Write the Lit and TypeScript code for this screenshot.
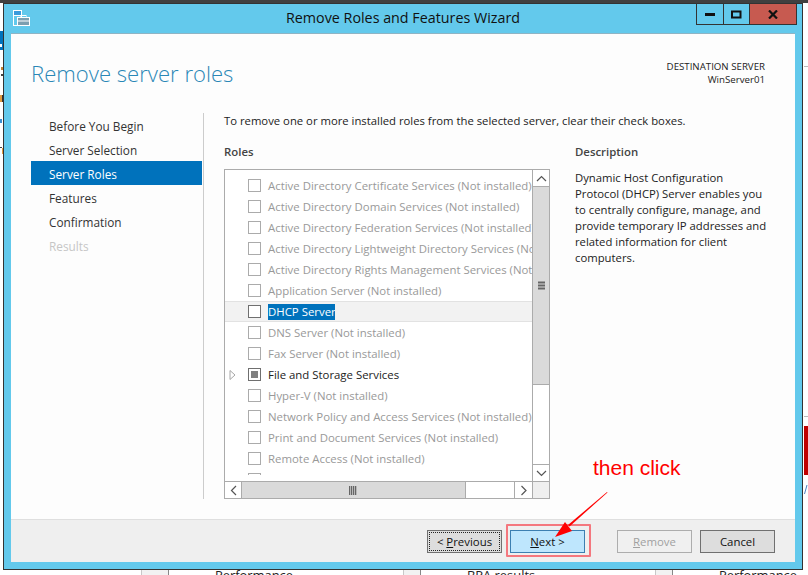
import { LitElement, html, css, svg } from "lit"
import { customElement } from "lit/decorators.js"
import { classMap } from "lit/directives/class-map.js"

const NAV = [
  { label: "Before You Begin" },
  { label: "Server Selection" },
  { label: "Server Roles", active: true },
  { label: "Features" },
  { label: "Confirmation" },
  { label: "Results", off: true },
]

const NI = " (Not installed)"
const ROLES = [
  { label: "Active Directory Certificate Services" + NI, off: true },
  { label: "Active Directory Domain Services" + NI, off: true },
  { label: "Active Directory Federation Services" + NI, off: true },
  { label: "Active Directory Lightweight Directory Services" + NI, off: true },
  { label: "Active Directory Rights Management Services" + NI, off: true },
  { label: "Application Server" + NI, off: true },
  { label: "DHCP Server", picked: true },
  { label: "DNS Server" + NI, off: true },
  { label: "Fax Server" + NI, off: true },
  { label: "File and Storage Services", partial: true, tree: true },
  { label: "Hyper-V" + NI, off: true },
  { label: "Network Policy and Access Services" + NI, off: true },
  { label: "Print and Document Services" + NI, off: true },
  { label: "Remote Access" + NI, off: true },
  { label: "Remote Desktop Services" + NI, off: true },
]

// scraps of the page behind the dialog, [x, y, w, h, colour]
const SCRAPS: [number, number, number, number, string][] = [
  [0, 31, 3, 19, "#0072bc"],
  [0, 44, 2, 3, "#ffffff"],
  [1, 67, 2, 3, "#c08030"],
  [1, 74, 2, 2, "#444444"],
  [0, 95, 2, 7, "#e09a40"],
  [2, 95, 1, 7, "#333333"],
  [0, 119, 2, 4, "#3a8fd0"],
  [0, 147, 2, 1, "#444444"],
  [2, 148, 1, 6, "#e09a40"],
  [804, 416, 4, 1, "#bbbbbb"],
  [804, 426, 4, 49, "#c00000"],
  [804, 66, 4, 1, "#bbbbbb"],
]

const chevron = (points: string) => html`
  <svg class="chev" width="15" height="15" viewBox="0 0 15 15">
    <polyline points=${points} fill="none" stroke="#555" stroke-width="1.2"></polyline>
  </svg>
`

@customElement("app-root")
export class AppRoot extends LitElement {
  static styles = css`
    :host {
      display: block;
      position: relative;
      width: 808px;
      height: 575px;
      overflow: hidden;
      background: #fff;
      font-family: "Open Sans", "Liberation Sans", sans-serif;
      font-size: 11.4px;
      color: #222;
    }

    .topband {
      height: 3px;
      background: #404040;
    }

    .scrap {
      position: absolute;
    }

    .behind {
      position: absolute;
      left: 0;
      top: 570px;
      width: 808px;
      height: 5px;
      overflow: hidden;
      display: grid;
      grid-template-columns: 141px 28px 234px 18px 234px 18px 135px;
      font-size: 12.9px;
      line-height: 16px;
      color: #222;
    }

    .behind .gap {
      background: #f2f2f2;
      border-left: 1px solid #c8c8c8;
      border-right: 1px solid #888;
    }

    .behind .cell {
      padding-left: 46px;
      margin-top: -3px;
      white-space: nowrap;
    }

    /* dialog window */
    .window {
      position: absolute;
      left: 3px;
      top: 3px;
      width: 800px;
      height: 567px;
      box-sizing: border-box;
      border: 1px solid #333;
      background: #63c9ec;
      padding: 0 7px 7px;
      display: flex;
      flex-direction: column;
    }

    .titlebar {
      height: 30px;
      flex: none;
      margin: 0 -7px;
      display: grid;
      grid-template-columns: 1fr auto 1fr;
      align-items: start;
    }

    .appicon {
      margin: 6px 0 0 9px;
      display: block;
    }

    .title {
      font-size: 14.3px;
      line-height: 28px;
      color: #111;
    }

    .caption {
      justify-self: end;
      margin-right: 5px;
      display: flex;
      height: 21px;
      border: 1px solid #333;
      border-top: 0;
      box-sizing: border-box;
    }

    .caption div {
      display: flex;
      align-items: center;
      justify-content: center;
      box-sizing: border-box;
      height: 20px;
    }

    .caption .min {
      width: 27px;
      border-right: 1px solid #333;
    }

    .caption .max {
      width: 26px;
      border-right: 1px solid #333;
    }

    .caption .close {
      width: 46px;
      background: #c75a50;
    }

    .client {
      flex: 1;
      min-height: 0;
      background: #fdfdfd;
      box-shadow: 0 -1px 0 #8fb4c4;
      display: flex;
      flex-direction: column;
    }

    .head {
      height: 79px;
      flex: none;
      box-sizing: border-box;
      padding: 24px 30px 0 20px;
      display: flex;
      justify-content: space-between;
      align-items: flex-start;
    }

    .page-title {
      font-size: 22.1px;
      font-weight: 300;
      line-height: 30px;
      color: #2a87b6;
    }

    .dest {
      margin-top: 2px;
      text-align: right;
      font-size: 9.7px;
      line-height: 13px;
      color: #222;
    }

    .body {
      flex: 1;
      min-height: 0;
      display: flex;
      padding-bottom: 20px;
    }

    .side {
      width: 193px;
      flex: none;
      box-sizing: border-box;
      padding: 0 1px 0 20px;
      border-right: 1px solid #ccc;
      font-size: 11.8px;
    }

    .nav {
      height: 24px;
      line-height: 27px;
      padding-left: 18px;
      color: #333;
    }

    .nav.active {
      background: #0072bc;
      line-height: 26px;
      color: #fff;
    }

    .nav.off {
      color: #c6c6c6;
    }

    .main {
      padding-left: 20px;
      flex: 1;
      min-width: 0;
    }

    .intro {
      font-size: 11.3px;
      line-height: 16px;
      color: #222;
    }

    .cols {
      margin-top: 15px;
      display: grid;
      grid-template-columns: 326px 200px;
      column-gap: 25px;
    }

    .heading {
      line-height: 16px;
      font-weight: 600;
      color: #444;
    }

    /* roles list */
    .list {
      margin-top: 9px;
      width: 326px;
      height: 330px;
      box-sizing: border-box;
      border: 1px solid #ababab;
      background: #fff;
      display: grid;
      grid-template-columns: 307px 17px;
      grid-template-rows: 311px 17px;
    }

    .rows {
      margin-top: 5px;
      height: 300px;
      overflow: hidden;
    }

    .row {
      height: 21px;
      display: grid;
      grid-template-columns: 23px 13px auto;
      column-gap: 0;
      align-items: center;
      white-space: nowrap;
      color: #222;
    }

    .row.off {
      color: #999;
    }

    .row.picked {
      background: #f2f2f2;
      box-shadow: inset 0 1px 0 #e2e2e2, inset 0 -1px 0 #e2e2e2;
    }

    .tree {
      display: block;
      margin-left: 4px;
    }

    .check {
      width: 13px;
      height: 13px;
      box-sizing: border-box;
      border: 1px solid #6f6f6f;
      background: #fff;
      display: flex;
      align-items: center;
      justify-content: center;
    }

    .off .check {
      border-color: #ababab;
    }

    .check i {
      width: 7px;
      height: 7px;
      background: #808080;
    }

    .label {
      margin-left: 7px;
      line-height: 16px;
    }

    .label.sel {
      background: #0072bc;
      color: #fff;
      justify-self: start;
      width: 67px;
      overflow: hidden;
    }

    .vbar {
      display: flex;
      flex-direction: column;
      border-left: 1px solid #ababab;
      width: 17px;
      box-sizing: border-box;
    }

    .hbar {
      display: flex;
      border-top: 1px solid #ababab;
      height: 17px;
      box-sizing: border-box;
    }

    .sbtn {
      width: 16px;
      height: 16px;
      flex: none;
      display: flex;
      align-items: center;
      justify-content: center;
      background: #fff;
    }

    .vbar .sbtn.up {
      border-bottom: 1px solid #ababab;
    }

    .vbar .sbtn.down {
      border-top: 1px solid #ababab;
      margin-top: auto;
    }

    .hbar .sbtn.left {
      border-right: 1px solid #ababab;
    }

    .hbar .sbtn.right {
      border-left: 1px solid #ababab;
      margin-left: auto;
      width: 17px;
    }

    .thumb {
      background: #dadada;
      display: flex;
      align-items: center;
      justify-content: center;
      box-sizing: border-box;
    }

    .vbar .thumb {
      height: 198px;
      border-bottom: 1px solid #ababab;
    }

    .hbar .thumb {
      width: 224px;
      border-right: 1px solid #ababab;
    }

    .grip {
      display: block;
    }

    .corner {
      background: #efefef;
      border-top: 1px solid #ababab;
      border-left: 1px solid #ababab;
      box-sizing: border-box;
    }

    .desc {
      margin-top: 10px;
      font-size: 11.3px;
      line-height: 16px;
      color: #222;
    }

    /* wizard footer */
    .foot {
      height: 43px;
      flex: none;
      box-sizing: border-box;
      background: #efefef;
      border-top: 1px solid #dfdfdf;
      padding: 10px 20px 0 0;
      display: flex;
      justify-content: flex-end;
      gap: 8px;
    }

    .btn {
      width: 75px;
      height: 23px;
      box-sizing: border-box;
      border: 1px solid #707070;
      background: #ddd;
      font: inherit;
      font-size: 11.4px;
      color: #111;
      padding: 0;
      display: flex;
      align-items: center;
      justify-content: center;
    }

    .btn.prev {
      outline: 1px dotted #222;
      outline-offset: -3px;
    }

    .btn.next {
      border-color: #3c7fb1;
      background: #bee6fd;
      margin-right: 24px;
    }

    .btn.dis {
      border-color: #adadad;
      background: #f0f0f0;
      color: #a0a0a0;
    }

    /* red annotation drawn on top of the screenshot */
    .mark {
      position: absolute;
      left: 506px;
      top: 524px;
      width: 85px;
      height: 33px;
      box-sizing: border-box;
      border: 2px solid #f4777e;
      border-radius: 1px;
    }

    .note {
      position: absolute;
      left: 593px;
      top: 456px;
      font-family: "Liberation Sans", Arial, sans-serif;
      font-size: 21px;
      line-height: 24px;
      color: #f00;
    }

    .arrow {
      position: absolute;
      left: 0;
      top: 0;
      pointer-events: none;
    }
  `

  render() {
    return html`
      <div class="topband"></div>
      ${SCRAPS.map(
        ([x, y, w, h, c]) =>
          html`<div class="scrap" style="left:${x}px;top:${y}px;width:${w}px;height:${h}px;background:${c}"></div>`
      )}
      <div class="behind">
        <div></div>
        <div class="gap"></div>
        <div class="cell">Performance</div>
        <div class="gap"></div>
        <div class="cell">BPA results</div>
        <div class="gap"></div>
        <div class="cell">Performance</div>
      </div>

      <div class="window">
        <div class="titlebar">
          ${this._appIcon()}
          <div class="title">Remove Roles and Features Wizard</div>
          <div class="caption">
            <div class="min">
              <svg width="11" height="4" viewBox="0 0 11 4"><rect y="1" width="10" height="3" fill="#111"></rect></svg>
            </div>
            <div class="max">
              <svg width="11" height="9" viewBox="0 0 11 9"><rect x="1" y="1.5" width="8.5" height="6" fill="none" stroke="#111" stroke-width="2"></rect></svg>
            </div>
            <div class="close">
              <svg width="10" height="9" viewBox="0 0 10 9"><path d="M1 .5 9 8.5M9 .5 1 8.5" stroke="#111" stroke-width="2.2" fill="none"></path></svg>
            </div>
          </div>
        </div>

        <div class="client">
          <div class="head">
            <div class="page-title">Remove server roles</div>
            <div class="dest">DESTINATION SERVER<br />WinServer01</div>
          </div>

          <div class="body">
            <div class="side">
              ${NAV.map(
                (n) => html`<div class=${classMap({ nav: true, active: !!n.active, off: !!n.off })}>${n.label}</div>`
              )}
            </div>
            <div class="main">
              <div class="intro">To remove one or more installed roles from the selected server, clear their check boxes.</div>
              <div class="cols">
                <div>
                  <div class="heading">Roles</div>
                  ${this._list()}
                </div>
                <div>
                  <div class="heading">Description</div>
                  <div class="desc">
                    Dynamic Host Configuration<br />
                    Protocol (DHCP) Server enables you<br />
                    to centrally configure, manage, and<br />
                    provide temporary IP addresses and<br />
                    related information for client<br />
                    computers.
                  </div>
                </div>
              </div>
            </div>
          </div>

          <div class="foot">
            <button class="btn prev">&lt;&nbsp;<u>P</u>revious</button>
            <button class="btn next"><u>N</u>ext&nbsp;&gt;</button>
            <button class="btn dis"><u>R</u>emove</button>
            <button class="btn">Cancel</button>
          </div>
        </div>
      </div>

      <div class="mark"></div>
      <div class="note">then click</div>
      <svg class="arrow" width="808" height="575" viewBox="0 0 808 575">
        <polygon points="607,492 607.5,492.5 569.5,526.5 568,525" fill="#f00"></polygon>
        <polygon points="555,537 565,522 572,531" fill="#f00"></polygon>
        <path d="M807 485 804.5 494" stroke="#4a7fc0" fill="none"></path>
      </svg>
    `
  }

  private _list() {
    return html`
      <div class="list">
        <div class="rows">
          ${ROLES.map(
            (r) => html`
              <div class=${classMap({ row: true, off: !!r.off, picked: !!r.picked })}>
                ${r.tree
                  ? html`<svg class="tree" width="7" height="10" viewBox="0 0 7 10"><polygon points="1,.5 6,5 1,9.5" fill="none" stroke="#a6a6a6"></polygon></svg>`
                  : html`<span></span>`}
                <div class="check">${r.partial ? html`<i></i>` : ""}</div>
                <div class=${classMap({ label: true, sel: !!r.picked })}>${r.label}</div>
              </div>
            `
          )}
        </div>
        <div class="vbar">
          <div class="sbtn up">${chevron("3,10 7.5,5.5 12,10")}</div>
          <div class="thumb">
            <svg class="grip" width="9" height="9" viewBox="0 0 9 9">
              ${[0.5, 3.5, 6.5].map((y) => svg`<rect x="1" y=${y} width="7" height="2" fill="#666"></rect>`)}
            </svg>
          </div>
          <div class="sbtn down">${chevron("3,5 7.5,9.5 12,5")}</div>
        </div>
        <div class="hbar">
          <div class="sbtn left">${chevron("10,3 5.5,7.5 10,12")}</div>
          <div class="thumb">
            <svg class="grip" width="9" height="9" viewBox="0 0 9 9">
              ${[0, 2, 4, 6].map((x) => svg`<rect x=${x} y="0" width="1.3" height="9" fill="#666"></rect>`)}
            </svg>
          </div>
          <div class="sbtn right">${chevron("5.5,3 10,7.5 5.5,12")}</div>
        </div>
        <div class="corner"></div>
      </div>
    `
  }

  private _appIcon() {
    return html`
      <svg class="appicon" width="17" height="16" viewBox="0 0 17 16">
        <rect x="0.5" y="0.5" width="8" height="15" fill="#3a9bdc" stroke="#fff"></rect>
        <rect x="1" y="5" width="7" height="1" fill="#fff"></rect>
        <rect x="1" y="6" width="7" height="9" fill="#63c9ec"></rect>
        <rect x="4.5" y="7.5" width="12" height="8" fill="#7d9fb0" stroke="#fff"></rect>
        <rect x="8" y="5.5" width="5" height="2" fill="none" stroke="#fff"></rect>
        <rect x="5" y="10.5" width="11" height="1" fill="#fff"></rect>
      </svg>
    `
  }
}
